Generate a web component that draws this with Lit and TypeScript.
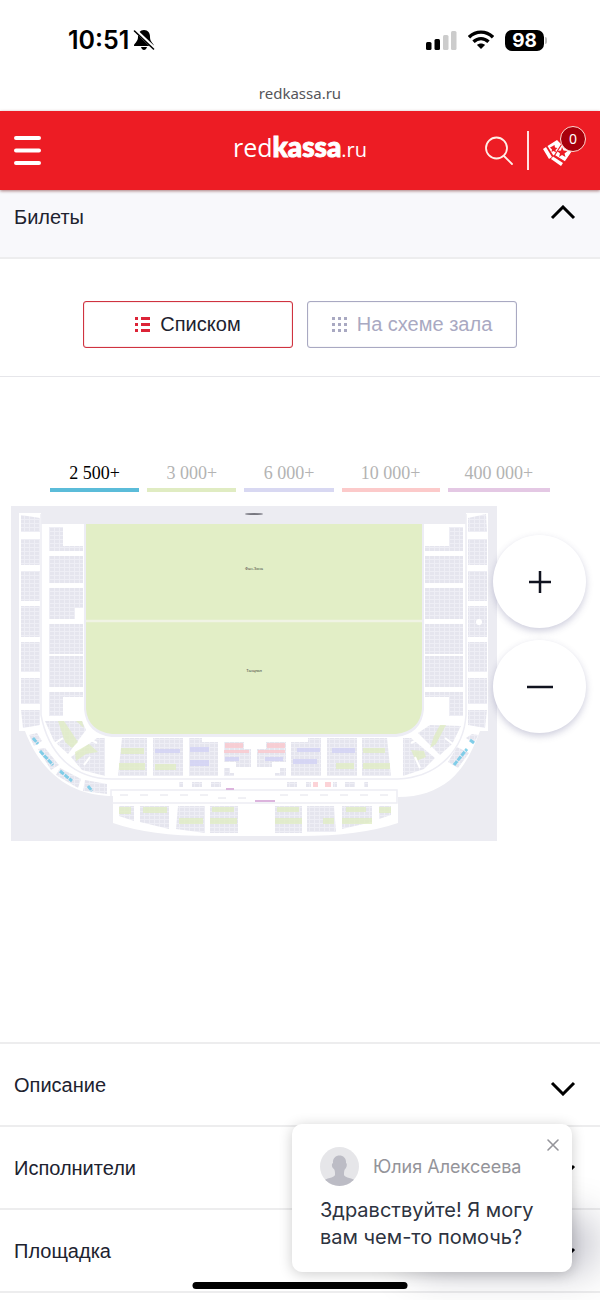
import { LitElement, html, svg, css } from "lit";
import { customElement, state } from "lit/decorators.js";

type Box = [number, number, number, number];

const PRICES = [
  { label: "2 500+", tone: "blue" },
  { label: "3 000+", tone: "green" },
  { label: "6 000+", tone: "violet" },
  { label: "10 000+", tone: "red" },
  { label: "400 000+", tone: "pink" },
];

const OUTER_ROWS: [number, number][] = [
  [539, 26], [571, 30], [606, 31], [642, 30], [678, 26],
];
const INNER_ROWS: [number, number][] = [
  [556, 27], [588, 31], [624, 30], [656, 31],
];

const SEATS: Box[] = [
  ...OUTER_ROWS.flatMap(([y, h]): Box[] => [[21, y, 19, h], [468, y, 19, h]]),
  ...INNER_ROWS.flatMap(([y, h]): Box[] => [[49, y, 34, h], [425, y, 38, h]]),
  [49, 527, 14, 20], [49, 546, 34, 5], [449, 527, 14, 20], [425, 546, 38, 5],
  [49, 692, 34, 5], [49, 696, 14, 20], [425, 692, 38, 5], [449, 696, 14, 20],
  [153, 738, 30, 38], [189, 742, 29, 34], [189, 738, 13, 5],
  [224, 742, 20, 7], [224, 749, 27, 13], [236, 762, 15, 5], [224, 768, 6, 8], [230, 773, 4, 3],
  [266, 742, 20, 7], [257, 749, 29, 13], [257, 762, 15, 5], [280, 768, 6, 8], [275, 773, 5, 3],
  [291, 742, 30, 34], [308, 738, 13, 5], [327, 738, 30, 38],
  [210, 806, 28, 27], [275, 806, 27, 27],
  [179, 782, 4, 5], [192, 782, 10, 5], [211, 782, 10, 5],
  [287, 782, 10, 5], [306, 782, 5, 5], [333, 782, 4, 5], [345, 782, 10, 5], [364, 782, 4, 5],
];

const SEAT_SHAPES = [
  "21,515 40,518 40,532 21,532", "468,518 486,514 487,532 468,532",
  "21,710 40,710 40,725 23,728", "468,710 487,710 485,728 468,725",
  "45,721 82,721 86,730 68,754 54,741",
  "71,757 97,738 105,738 105,776 82,770",
  "461,726 430,725 418,733 440,755 452,744",
  "403,738 411,738 435,758 424,769 403,776",
  "122,738 147,738 147,776 118,776", "362,738 387,738 391,776 362,776",
  "119,806 134,806 134,821 119,816", "379,806 391,806 391,815 379,819",
  "140,806 169,806 169,829 140,822", "342,806 372,806 372,822 342,829",
  "178,806 205,806 205,833 176,829", "307,806 334,806 336,832 307,832",
  "29,735 37,733 42,741 34,746", "38,749 45,748 59,765 51,770",
  "60,768 81,779 78,788 56,775", "85,780 107,784 107,794 83,791",
  "466,738 472,734 478,735 474,744", "457,747 469,753 458,768 448,762",
];

const TINTS: { tone: string; box: Box }[] = [
  ...([[121, 748, 23, 6], [119, 763, 26, 7], [155, 764, 21, 6], [336, 763, 18, 6], [363, 748, 22, 5],
    [363, 763, 27, 6], [119, 807, 12, 7], [143, 807, 24, 6], [179, 818, 24, 6], [212, 807, 22, 5],
    [210, 818, 27, 6], [277, 807, 22, 5], [275, 818, 27, 6], [323, 818, 11, 6], [342, 818, 30, 6],
    [346, 807, 20, 5], [379, 807, 12, 6]] as Box[]).map((box) => ({ tone: "green", box })),
  ...([[155, 749, 25, 4], [190, 747, 19, 5], [190, 760, 19, 6], [225, 757, 14, 4], [265, 757, 18, 4],
    [297, 748, 23, 4], [293, 759, 24, 5], [332, 748, 23, 5]] as Box[]).map((box) => ({ tone: "violet", box })),
  ...([[225, 743, 18, 5], [224, 750, 25, 3], [267, 743, 18, 5], [258, 750, 27, 3],
    [313, 782, 5, 5], [325, 782, 6, 5]] as Box[]).map((box) => ({ tone: "red", box })),
  ...([[226, 788, 8, 2], [255, 800, 20, 2]] as Box[]).map((box) => ({ tone: "pink", box })),
];

const chevron = svg`<path d="M2 13 L13 2 L24 13" />`;

@customElement("seat-map")
class SeatMap extends LitElement {
  static styles = css`
    :host { display: block; }
    svg { display: block; width: 100%; height: auto; }
    .ground { fill: #ececf2; }
    .stand { fill: #fff; }
    .line { fill: none; stroke: #ededf4; stroke-width: 1.5; }
    .aisle { fill: none; stroke: #fff; stroke-width: 2; }
    .edge { fill: none; stroke: #ededf5; stroke-width: 4; }
    .field { fill: #e2eec6; }
    .half { stroke: #f0f3e4; stroke-width: 2.5; }
    .seats { fill: url(#seats); }
    .green { fill: #dfecc0; opacity: .75; }
    .violet { fill: #cfcff4; opacity: .75; }
    .red { fill: #fbc4c9; opacity: .75; }
    .pink { fill: #dcb4dd; }
    .sold { fill: none; stroke: #5cc3e4; stroke-width: 3; stroke-dasharray: 5 1; opacity: .75; }
    .text { font: 4px "Liberation Sans", Arial, sans-serif; fill: #3d4238; text-anchor: middle; }
    .stage { fill: #777780; }
    .marks { stroke: #e2e2ea; stroke-width: 1; stroke-dasharray: 8 12; }
  `;

  render() {
    return html`
      <svg viewBox="11 506 486 335" role="img" aria-label="Схема зала">
        <defs>
          <pattern id="seats" width="5" height="4" patternUnits="userSpaceOnUse">
            <rect width="5" height="4" fill="#eeeef5" />
            <rect width="4" height="3" fill="#e5e5ee" />
          </pattern>
        </defs>
        <rect class="ground" x="11" y="506" width="486" height="335" />
        <path class="stand" d="M19 513H41V524H466V513H488V731H480C472 752 464 768 450 780C436 791 420 797 398 797V823Q360 836 300 836H210Q150 836 113 823V796C80 796 44 781 25 731H19Z" />
        <path class="line" d="M41 514V715C48 752 72 779 112 779H398C440 777 464 748 466 715V514" />
        <path class="line" d="M111 796V790H397V803H112" />
        <path class="edge" d="M86 524V709Q88 732 112 735H396Q420 732 422 709V524" />
        <path class="field" d="M86 524H422V709Q420 731 396 734H112Q88 731 86 709Z" />
        <path class="half" d="M86 621H422" />
        ${SEATS.map(([x, y, w, h]) => svg`<rect class="seats" x=${x} y=${y} width=${w} height=${h} />`)}
        ${SEAT_SHAPES.map((points) => svg`<polygon class="seats" points=${points} />`)}
        <rect class="stand" x="75" y="608" width="9" height="11" />
        <circle class="stand" cx="479" cy="622" r="3" />
        <path class="green" d="M58 721H64L78 742L72 748L65 742ZM76 721H82L84 728ZM75 752L89 744L98 752L86 754L76 761ZM440 725H446L436 744L430 748L434 736ZM411 750L424 751L426 757L416 761Z" />
        <path class="aisle" d="M54 744L63 738M84 765L90 757M97 743L91 740M453 744L445 738M420 768L415 757M411 743L419 739" />
        ${TINTS.map(({ tone, box: [x, y, w, h] }) => svg`<rect class=${tone} x=${x} y=${y} width=${w} height=${h} />`)}
        <path class="sold" d="M33 738L38 744M40 751L53 765M60 771L72 781M88 786L92 791M454 765L467 749M470 740L474 743" />
        <path class="marks" d="M120 795H210M280 795H390M218 798H250" />
        <ellipse class="stage" cx="254" cy="514" rx="9" ry="1" />
        <text class="text" x="254" y="570">Фан-Зона</text>
        <text class="text" x="254" y="672">Танцпол</text>
      </svg>
    `;
  }
}

@customElement("chat-card")
class ChatCard extends LitElement {
  static styles = css`
    :host {
      display: block; box-sizing: border-box; padding: 23px 28px 21px; background: #fff;
      border-radius: 10px; box-shadow: 0 2px 14px rgba(0, 0, 0, .2), 70px 46px 44px -50px rgba(0, 0, 40, .3);
      font-family: Inter, "Noto Sans", sans-serif;
    }
    .agent { display: flex; align-items: center; gap: 14px; color: #94949a; font-size: 18px; line-height: 24px; white-space: nowrap; }
    .avatar { flex: none; width: 39px; height: 39px; }
    .message { margin: 11px 0 0; font-size: 20px; line-height: 27px; color: #2d3340; white-space: nowrap; }
    .close { position: absolute; top: 8px; right: 6px; width: 26px; height: 26px; padding: 6px; border: 0; background: none; }
    .close svg { display: block; width: 14px; height: 14px; }
  `;

  render() {
    return html`
      <button class="close" aria-label="Закрыть">
        <svg viewBox="0 0 14 14" stroke="#94949a" stroke-width="1.6" stroke-linecap="round"><path d="M2 2L12 12M12 2L2 12" /></svg>
      </button>
      <div class="agent">
        <svg class="avatar" viewBox="0 0 39 39">
          <defs><clipPath id="round"><circle cx="19.500" cy="19.500" r="19.500" /></clipPath></defs>
          <g clip-path="url(#round)">
            <rect width="39" height="39" fill="#e6e6e9" />
            <path fill="#bcbcc5" d="M13 16C12 6 27 6 26 16C28 17 26 22 25 22C24 24 24 25 24 28C25 31 33 31 36 34V39H3V34C6 31 14 31 15 28C15 25 15 24 14 22C12 21 11 17 13 16Z" />
          </g>
        </svg>
        <span>Юлия Алексеева</span>
      </div>
      <p class="message">Здравствуйте! Я могу<br />вам чем-то помочь?</p>
    `;
  }
}

@customElement("app-root")
class AppRoot extends LitElement {
  @state() private price = 0;

  static styles = css`
    :host {
      display: flex; flex-direction: column; position: relative; min-height: 100vh; background: #fff;
      overflow: hidden; font-family: "Liberation Sans", Arial, sans-serif; color: #20222f;
    }
    * { box-sizing: border-box; }
    button { font: inherit; color: inherit; cursor: pointer; }
    svg { display: block; flex: none; }

    .status { display: flex; align-items: center; justify-content: space-between; height: 80px; padding: 0 53px 0 68px; font-family: Inter, sans-serif; color: #000; }
    .clock, .signals { display: flex; align-items: center; }
    .clock { gap: 4px; font-size: 25px; font-weight: 600; line-height: 30px; }
    .signals { gap: 11px; }
    .battery { display: flex; align-items: center; gap: 1px; }
    .charge { width: 39px; border-radius: 7px; background: #000; color: #fff; font-size: 19px; font-weight: 700; line-height: 21px; text-align: center; }
    .tip { width: 2px; height: 7px; border-radius: 0 2px 2px 0; background: #bbb; }
    .address { height: 31px; font: 15px/26px "Noto Sans", sans-serif; color: #55555a; text-align: center; }

    .bar { display: grid; grid-template-columns: 1fr auto 1fr; align-items: center; height: 79px; padding: 0 14px; background: #ed1c24; color: #fff; position: relative; box-shadow: 0 1px 3px rgba(90, 0, 0, .5); }
    .icon { padding: 0; border: 0; background: none; }
    .logo { display: flex; align-items: baseline; padding-bottom: 5px; color: #fff; font: 25px/34px "Open Sans", sans-serif; text-decoration: none; }
    .logo-strong { font-family: Lato, sans-serif; font-weight: 900; font-size: 28px; -webkit-text-stroke: 1px #fff; }
    .logo-zone { font-size: 20px; }
    .tools { display: flex; align-items: center; justify-content: flex-end; gap: 14px; }
    .divider { width: 2px; height: 39px; background: #ffe2e2; }
    .cart { position: relative; }
    .count { position: absolute; top: -8px; right: 0; width: 26px; height: 26px; border: 1px solid #ffd9d0; border-radius: 50%; background: #a8000c; font: 14px/24px "Noto Sans", sans-serif; text-align: center; }

    .row { display: flex; align-items: center; justify-content: space-between; width: 100%; height: 83px; padding: 0 24px 0 14px; border: 0; border-bottom: 2px solid #ededee; background: #fff; font-size: 20px; line-height: 24px; text-align: left; }
    .open { height: 69px; padding-bottom: 14px; background: #f8f8fb; }
    .chevron { width: 26px; height: 23px; fill: none; stroke: #000; stroke-width: 3; }
    .down { transform: rotate(180deg); }

    .modes { display: grid; grid-template-columns: 210px 210px; justify-content: center; gap: 14px; padding: 42px 14px 28px; border-bottom: 1px solid #e6e6ea; }
    .mode { display: flex; align-items: center; justify-content: center; gap: 10px; height: 47px; padding: 0; border: 1px solid #a9a9c2; border-radius: 3px; background: #fff; color: #a9a9c2; font-size: 20px; box-shadow: inset 0 0 1px #a9a9c2; }
    .active { border-color: #cf3340; color: #20222f; box-shadow: inset 0 0 1px #cf3340; }

    .tickets { position: relative; padding: 82px 0 201px; border-bottom: 2px solid #ededee; }
    .prices { display: grid; grid-template-columns: 89fr 89fr 89fr 98fr 102fr; gap: 8px; padding: 0 50px 14px; }
    .price { height: 33px; padding: 0 0 1px; border: 0; border-bottom: 4px solid; background: none; font: 18px/26px "Liberation Serif", "Times New Roman", serif; white-space: nowrap; }
    .price span { color: #b3b3b3; }
    .price.chosen span { color: #000; }
    .blue { border-color: #5bbcd9; }
    .green { border-color: #e0ecc2; }
    .violet { border-color: #d8d8f2; }
    .red { border-color: #fccaca; }
    .pink { border-color: #e4c8e4; }
    .map { width: 81%; margin-left: 11px; }
    .zoom { position: absolute; top: 158px; right: 14px; display: grid; gap: 12px; }
    .round { display: grid; place-items: center; width: 93px; height: 93px; padding: 0; border: 0; border-radius: 50%; background: #fff; box-shadow: 0 3px 7px rgba(60, 60, 120, .25); }

    .chat { position: absolute; right: 28px; bottom: 28px; width: 280px; }
    .home { position: absolute; bottom: 11px; left: 50%; width: 215px; height: 7px; border-radius: 4px; background: #000; transform: translateX(-50%); }
  `;

  private section(title: string) {
    return html`
      <button class="row" aria-expanded="false">
        <span>${title}</span>
        <svg class="chevron down" viewBox="0 0 26 23">${chevron}</svg>
      </button>
    `;
  }

  render() {
    return html`
      <div class="status">
        <div class="clock">
          <span>10:51</span>
          <svg width="22" height="22" viewBox="0 0 22 22">
            <path d="M11 1C7 1 5 4 5 8C5 12 2 14 1 16C1 17 1 17 2 17H20C21 17 21 16 20 15C19 13 17 12 17 8C17 4 15 1 11 1ZM8 18H14C13 22 9 22 8 18Z" />
            <path d="M2 1L22 20" stroke="#fff" stroke-width="3.500" />
            <path d="M1.500 2L20.500 20" stroke="#000" stroke-width="1.600" stroke-linecap="round" />
          </svg>
        </div>
        <div class="signals">
          <svg width="31" height="20" viewBox="0 0 31 20">
            <rect y="12" width="5.500" height="8" rx="1.500" /><rect x="8.500" y="9" width="5.500" height="11" rx="1.500" />
            <rect x="17" y="5" width="5.500" height="15" rx="1.500" fill="#ccc" /><rect x="25" y="1" width="5.500" height="19" rx="1.500" fill="#ccc" />
          </svg>
          <svg width="26" height="20" viewBox="0 0 26 20" fill="none" stroke="#000" stroke-width="3.400">
            <path d="M1 7.200C8 .4 18 .4 25 7.200M5.500 11.800C10 7.600 16 7.600 20.500 11.800" />
            <path d="M13 19L9 15C11 13 15 13 17 15Z" fill="#000" stroke="none" />
          </svg>
          <div class="battery"><div class="charge">98</div><div class="tip"></div></div>
        </div>
      </div>
      <div class="address">redkassa.ru</div>

      <header class="bar">
        <button class="icon" aria-label="Меню">
          <svg width="27" height="31" viewBox="0 0 27 31" stroke="#fff" stroke-width="4" stroke-linecap="round"><path d="M2 3H25M2 15.500H25M2 28H25" /></svg>
        </button>
        <a class="logo" href="#"><span>red</span><span class="logo-strong">kassa</span><span class="logo-zone">.ru</span></a>
        <div class="tools">
          <button class="icon" aria-label="Поиск">
            <svg width="28" height="30" viewBox="0 0 28 30" fill="none" stroke="#fff0e8" stroke-width="1.800" stroke-linecap="round"><circle cx="11.500" cy="12" r="10.500" /><path d="M19 20L27 28" /></svg>
          </button>
          <div class="divider"></div>
          <button class="icon cart" aria-label="Корзина">
            <svg width="43" height="34" viewBox="0 0 43 34">
              <path d="M0 15L3 13L9 23L6 25ZM4.500 12L14 6L20 12L12 22L10 21Z" fill="#fff" />
              <path d="M9 12.500L11.500 11L12 13.500L14.500 14L12.500 16L13 18.500L10.500 17L8.500 18L9 15.500L7 13.500Z" fill="#ed1c24" />
              <path d="M8 25L10 22.500L20 29L18 32Z" fill="#fff" />
              <path d="M11.500 21.500L19.500 9L31 15L22 28Z" fill="#fff" stroke="#ed1c24" stroke-width="1.200" />
              <path d="M19 13L20.500 16.500L24.500 17L21.500 19.500L22.500 23L19 21L16 23L17 19.500L14 17L18 16.500Z" fill="#ed1c24" />
            </svg>
            <span class="count">0</span>
          </button>
        </div>
      </header>

      <button class="row open" aria-expanded="true">
        <span>Билеты</span>
        <svg class="chevron" viewBox="0 0 26 23">${chevron}</svg>
      </button>

      <div class="modes">
        <button class="mode active">
          <svg width="15" height="15" viewBox="0 0 15 15" fill="#dc2437"><path d="M0 0H3V3H0ZM0 6H3V9H0ZM0 12H3V15H0ZM6 0H15V3H6ZM6 6H15V9H6ZM6 12H15V15H6Z" /></svg>
          <span>Списком</span>
        </button>
        <button class="mode">
          <svg width="15" height="15" viewBox="0 0 15 15" fill="#a9a9c2"><path d="M0 0H3V3H0ZM0 6H3V9H0ZM0 12H3V15H0ZM6 0H9V3H6ZM6 6H9V9H6ZM6 12H9V15H6ZM12 0H15V3H12ZM12 6H15V9H12ZM12 12H15V15H12Z" /></svg>
          <span>На схеме зала</span>
        </button>
      </div>

      <section class="tickets">
        <div class="prices">
          ${PRICES.map(({ label, tone }, i) => html`
            <button class="price ${tone} ${i === this.price ? "chosen" : ""}" @click=${() => (this.price = i)}><span>${label}</span></button>
          `)}
        </div>
        <seat-map class="map"></seat-map>
        <div class="zoom">
          <button class="round" aria-label="Приблизить">
            <svg width="24" height="24" viewBox="0 0 24 24" stroke="#10131f" stroke-width="2.500"><path d="M1 12H23M12 1V23" /></svg>
          </button>
          <button class="round" aria-label="Отдалить">
            <svg width="26" height="24" viewBox="0 0 26 24" stroke="#10131f" stroke-width="2.500"><path d="M0 12H26" /></svg>
          </button>
        </div>
      </section>

      ${["Описание", "Исполнители", "Площадка"].map((title) => this.section(title))}

      <chat-card class="chat"></chat-card>
      <div class="home"></div>
    `;
  }
}
